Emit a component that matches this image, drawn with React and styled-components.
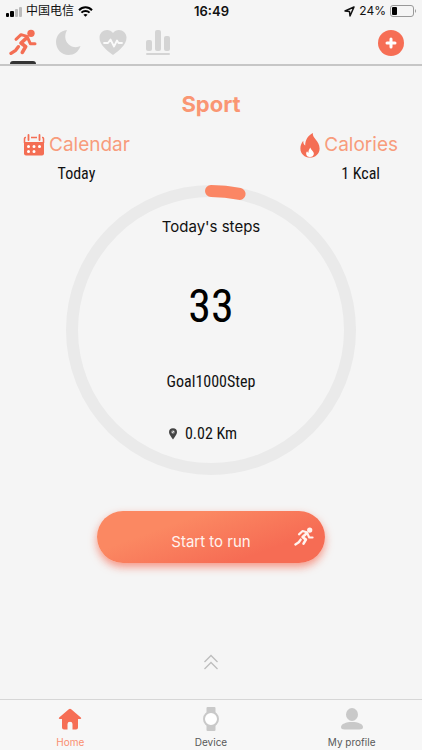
import React from "react";
import styled, { createGlobalStyle } from "styled-components";

const sans = `Inter, "Noto Sans CJK SC", sans-serif`;
const narrow = `"Roboto Condensed", "Liberation Sans Narrow", "Open Sans Condensed", sans-serif`;

const GlobalStyle = createGlobalStyle`
  *, *::before, *::after { box-sizing: border-box; }
  body { margin: 0; background: #f5f5f5; color: #111; font-family: ${sans}; }
  h1, h2, p { margin: 0; font-weight: 400; }
  button { border: 0; padding: 0; background: none; font: inherit; color: inherit; cursor: pointer; }
  a { text-decoration: none; }
  svg { display: block; flex: none; }
`;

const Screen = styled.div`
  min-height: 100vh;
  display: flex;
  flex-direction: column;
`;

const StatusBar = styled.div`
  display: grid;
  grid-template-columns: 1fr auto 1fr;
  align-items: center;
  height: 22px;
  padding: 0 5px 0 6px;
  font-size: 12px;
  line-height: 22px;
`;

const StatusGroup = styled.div`
  display: flex;
  align-items: center;
  gap: 4px;
  justify-content: ${(p) => (p.$end ? "flex-end" : "flex-start")};
`;

const Clock = styled.time`
  font-size: 13px;
  font-weight: 600;
`;

const Toolbar = styled.header`
  display: flex;
  justify-content: space-between;
  height: 44px;
  padding-right: 18px;
  border-bottom: 2px solid #c6c6c6;
`;

const Modes = styled.nav`
  display: flex;
`;

const Mode = styled.button`
  display: flex;
  flex-direction: column;
  align-items: center;
  justify-content: space-between;
  width: 45px;
  padding-top: 7px;
  color: ${(p) => (p.$active ? "#f46e54" : "#d4d4d4")};

  &::after {
    content: "";
    width: 26px;
    height: 3px;
    border-radius: 6px 6px 0 0;
    background: ${(p) => (p.$active ? "#333" : "transparent")};
  }
`;

const AddButton = styled.button`
  align-self: center;
  display: grid;
  place-items: center;
  width: 26px;
  height: 26px;
  border-radius: 50%;
  background: #f66e55;
  color: #fff;
`;

const Main = styled.main`
  flex: 1;
  display: flex;
  flex-direction: column;
  align-items: center;
  padding-top: 22px;
`;

const Title = styled.h1`
  && { font-weight: 700; }
  font-size: 22px;
  line-height: 32px;
  color: #fa9673;
`;

const Stats = styled.div`
  align-self: stretch;
  display: flex;
  justify-content: space-between;
  padding: 11px 24px 0 23px;
`;

const Stat = styled.section`
  display: flex;
  flex-direction: column;
`;

const StatTitle = styled.h2`
  display: flex;
  align-items: center;
  gap: 4px;
  font-size: 19px;
  line-height: 28px;
  color: #f89c7c;
`;

const StatValue = styled.p`
  align-self: ${(p) => (p.$end ? "flex-end" : "center")};
  padding-right: ${(p) => (p.$end ? 18 : 0)}px;
  font-family: ${narrow};
  font-size: 16px;
  line-height: 30px;
`;

const Dial = styled.section`
  display: grid;
  justify-items: center;
  margin-top: -5px;

  > * { grid-area: 1 / 1; }
`;

const Readout = styled.div`
  display: flex;
  flex-direction: column;
  align-items: center;
  padding-top: 31px;
`;

const StepsLabel = styled.h2`
  font-size: 15px;
  line-height: 24px;
`;

const Steps = styled.p`
  padding-top: 37px;
  font-family: ${narrow};
  font-size: 46px;
  line-height: 60px;
  color: #000;
`;

const Detail = styled.p`
  display: flex;
  align-items: center;
  gap: 8px;
  padding-top: ${(p) => p.$space}px;
  font-family: ${narrow};
  font-size: 16px;
  line-height: 24px;
`;

const Distance = styled(Detail)`
  padding-right: 16px;
`;

const StartButton = styled.button`
  display: grid;
  grid-template-columns: 1fr auto 1fr;
  align-items: center;
  width: 54%;
  height: 52px;
  margin-top: 35px;
  padding: 0 11px;
  border-radius: 26px;
  background: linear-gradient(160deg, #fb8862 30%, #f66c54 75%);
  box-shadow: 0 4px 9px rgba(246, 100, 75, 0.65);
  color: #fff3ef;
  font-size: 15px;

  span { grid-column: 2; padding-top: 8px; white-space: nowrap; }
  svg { justify-self: end; }
`;

const ExpandButton = styled.button`
  margin-top: auto;
  margin-bottom: 29px;
  color: #bdbdbd;
`;

const TabBar = styled.nav`
  display: grid;
  grid-template-columns: repeat(3, 1fr);
  height: 51px;
  border-top: 1px solid #d6d6d6;
  background: #f7f7f7;
`;

const Tab = styled.a`
  display: flex;
  flex-direction: column;
  align-items: center;
  gap: 4px;
  padding-top: 7px;
  font-size: 10px;
  line-height: 14px;
  color: ${(p) => (p.$active ? "#fa8f70" : "#595959")};
`;

function Runner({ size }) {
  return (
    <svg width={size} height={size} viewBox="0 0 84 84" fill="none" stroke="currentColor" strokeLinecap="round" strokeLinejoin="round" aria-hidden="true">
      <circle cx="66" cy="13" r="11" fill="currentColor" stroke="none" />
      <path d="M21 31 36 17 54 22 64 44H78" strokeWidth="9" />
      <path d="M54 26 36 42 50 53 40 70" strokeWidth="11" />
      <path d="M6 73 20 64 28 53" strokeWidth="10" />
    </svg>
  );
}

function Signal() {
  return (
    <svg width="16" height="11" viewBox="0 0 16 11" aria-hidden="true">
      <rect y="7" width="3" height="4" rx="1" />
      <rect x="4" y="5" width="4" height="6" rx="1" />
      <rect x="9" y="3" width="3" height="8" rx="1" fill="#bbb" />
      <rect x="13" y="1" width="3" height="10" rx="1" fill="#bbb" />
    </svg>
  );
}

function Wifi() {
  return (
    <svg width="15" height="11" viewBox="0 0 15 11" fill="none" stroke="#000" strokeWidth="2" aria-hidden="true">
      <path d="M1 4.2C4.6.4 10.4.4 14 4.2M3.4 6.6c2.300-2.300 5.900-2.300 8.200 0" />
      <path d="M7.500 10.800 5.400 8.700c1.200-1.100 3-1.100 4.200 0Z" fill="#000" stroke="none" />
    </svg>
  );
}

function LocationArrow() {
  return (
    <svg width="11" height="11" viewBox="0 0 11 11" fill="none" stroke="#111" strokeWidth="1.500" strokeLinejoin="round" aria-hidden="true">
      <path d="M10 1 1 5l4.500.500L6 10Z" />
    </svg>
  );
}

function Battery() {
  return (
    <svg width="27" height="12" viewBox="0 0 27 12" aria-hidden="true">
      <rect x=".5" y=".5" width="23" height="11" rx="2.500" fill="none" stroke="#999" />
      <rect x="2" y="2" width="5" height="8" rx="1" />
      <path d="M25 4q2 2 0 4Z" fill="#999" />
    </svg>
  );
}

function Moon() {
  return (
    <svg width="26" height="27" viewBox="0 0 26 27" fill="currentColor" aria-hidden="true">
      <path d="M12 1C5.500 1.500 1 6.500 1 13c0 7 5.500 13 12.500 13 5.600 0 10.100-3.200 12-9-3.500 1.900-8.800 1.500-12-1.700C9.800 11.600 9.300 6 12 1Z" />
    </svg>
  );
}

function Heart() {
  return (
    <svg width="28" height="27" viewBox="0 0 28 27" aria-hidden="true">
      <path d="M14 26C8 21.500.500 16 .500 8.800.500 1 10-1.500 14 4c4-5.500 13.500-3 13.500 4.800C27.500 16 20 21.500 14 26Z" fill="currentColor" />
      <path d="M5 14h4l2.500-3.500 3.500 7 3-6 1.500 2.500H23" fill="none" stroke="#fafafa" strokeWidth="1.800" strokeLinejoin="round" strokeLinecap="round" />
    </svg>
  );
}

function Bars() {
  return (
    <svg width="26" height="27" viewBox="0 0 26 27" fill="currentColor" aria-hidden="true">
      <rect x="1" y="11" width="6" height="11" rx="2" />
      <rect x="10" y="1" width="6" height="21" rx="2" />
      <rect x="19" y="7" width="6" height="15" rx="2" />
      <rect x="1" y="24" width="24" height="2" rx="1" />
    </svg>
  );
}

function Plus() {
  return (
    <svg width="12" height="12" viewBox="0 0 12 12" stroke="currentColor" strokeWidth="3" strokeLinecap="round" aria-hidden="true">
      <path d="M6 2v8M2 6h8" />
    </svg>
  );
}

function Calendar() {
  return (
    <svg width="22" height="22" viewBox="0 0 22 22" fill="none" stroke="#f46e54" aria-hidden="true">
      <path d="M3 3.500h-.500q-1 0-1 1V9M8 3.500h6M19 3.500h.500q1 0 1 1V9" strokeWidth="1.500" />
      <path d="M5.500 1v5M16.500 1v5" strokeWidth="1.800" strokeLinecap="round" />
      <path d="M1 8h20v11.500a2 2 0 0 1-2 2H3a2 2 0 0 1-2-2Z" fill="#f46e54" stroke="none" />
      <path d="M5.500 12.500h.01M11 12.500h.01M16.500 12.500h.01M5.500 17.500h.01M11 17.500h.01" stroke="#fff" strokeWidth="3" strokeLinecap="round" />
    </svg>
  );
}

function Flame() {
  return (
    <svg width="20" height="25" viewBox="0 0 20 26" aria-hidden="true">
      <path d="M13 0c-1 5 7 8.500 7 16 0 5.500-4.500 9.500-10 9.500S0 21.500 0 16c0-3 1-5.500 3-8 0 2.500.500 4 2 5C5 7 8 2.500 13 0Z" fill="#f46e54" />
      <path d="M10.500 15c0 2.500 3.500 3.500 3.500 6.500 0 2-1.700 3.500-4 3.500s-4-1.500-4-3.500c0-1 .300-1.800 1-2.500.300 1 .800 1.300 1.400 1.500 0-2.200.600-4 2.100-5.500Z" fill="#fff" />
    </svg>
  );
}

function Pin() {
  return (
    <svg width="8" height="12" viewBox="0 0 8 12" aria-hidden="true">
      <path d="M4 11.500C2.500 9 0 6.500 0 4.200a4 4 0 0 1 8 0C8 6.500 5.500 9 4 11.500Z" fill="#444" />
      <circle cx="4" cy="4" r="1.800" fill="#999" />
      <path d="m3.200 4.800 1.700-1.700" stroke="#eee" />
    </svg>
  );
}

function ChevronsUp() {
  return (
    <svg width="16" height="16" viewBox="0 0 16 16" fill="none" stroke="currentColor" strokeWidth="1.300" aria-hidden="true">
      <path d="m1.500 8 6.500-6.500L14.500 8M1.500 15 8 8.500l6.500 6.500" />
    </svg>
  );
}

function Home() {
  return (
    <svg width="24" height="24" viewBox="0 0 24 24" fill="#f66e55" aria-hidden="true">
      <path d="M10.800 2.200q1.200-1.100 2.400 0l9.600 8.300c.700.700.400 1.500-.500 1.500H20v8.500a2 2 0 0 1-2 2h-3.500V17q0-2.300-2.500-2.300T9.500 17v5.500H6a2 2 0 0 1-2-2V12H1.700c-.900 0-1.200-.800-.500-1.500Z" />
    </svg>
  );
}

function Watch() {
  return (
    <svg width="24" height="24" viewBox="0 0 24 24" fill="#c9c9c9" aria-hidden="true">
      <rect x="7.500" width="9" height="7" rx="1" />
      <rect x="7.500" y="17" width="9" height="7" rx="1" />
      <circle cx="12" cy="12" r="7" fill="#fff" stroke="#c9c9c9" strokeWidth="2" />
    </svg>
  );
}

function Person() {
  return (
    <svg width="24" height="24" viewBox="0 0 24 24" fill="#c9c9c9" aria-hidden="true">
      <ellipse cx="12" cy="7.500" rx="6" ry="6.500" />
      <path d="M1 20c0-3 5-5 11-5s11 2 11 5c0 1.800-1.500 2.500-3.500 2.500h-15C2.500 22.500 1 21.800 1 20Z" />
    </svg>
  );
}

function Ring({ steps, goal }) {
  return (
    <svg width="292" height="292" viewBox="0 0 292 292" fill="none" strokeWidth="12" aria-hidden="true">
      <circle cx="146" cy="146" r="139" stroke="#eaeaea" />
      <circle cx="146" cy="146" r="139" stroke="#fb8664" strokeLinecap="round" pathLength={goal} strokeDasharray={`${steps} ${goal}`} transform="rotate(-90 146 146)" />
    </svg>
  );
}

const modes = [
  { name: "Sport", icon: <Runner size={28} /> },
  { name: "Sleep", icon: <Moon /> },
  { name: "Heart rate", icon: <Heart /> },
  { name: "Statistics", icon: <Bars /> },
];

const tabs = [
  { name: "Home", icon: <Home /> },
  { name: "Device", icon: <Watch /> },
  { name: "My profile", icon: <Person /> },
];

export default function App() {
  return (
    <>
      <GlobalStyle />
      <Screen>
        <StatusBar>
          <StatusGroup>
            <Signal />
            <span lang="zh-CN">中国电信</span>
            <Wifi />
          </StatusGroup>
          <Clock>16:49</Clock>
          <StatusGroup $end>
            <LocationArrow />
            <span>24%</span>
            <Battery />
          </StatusGroup>
        </StatusBar>
        <Toolbar>
          <Modes>
            {modes.map((mode, i) => (
              <Mode key={mode.name} type="button" aria-label={mode.name} $active={i === 0}>
                {mode.icon}
              </Mode>
            ))}
          </Modes>
          <AddButton type="button" aria-label="Add">
            <Plus />
          </AddButton>
        </Toolbar>
        <Main>
          <Title>Sport</Title>
          <Stats>
            <Stat>
              <StatTitle><Calendar />Calendar</StatTitle>
              <StatValue>Today</StatValue>
            </Stat>
            <Stat>
              <StatTitle><Flame />Calories</StatTitle>
              <StatValue $end>1 Kcal</StatValue>
            </Stat>
          </Stats>
          <Dial>
            <Ring steps={33} goal={1000} />
            <Readout>
              <StepsLabel>Today's steps</StepsLabel>
              <Steps>33</Steps>
              <Detail $space={34}>Goal1000Step</Detail>
              <Distance $space={28}><Pin />0.02 Km</Distance>
            </Readout>
          </Dial>
          <StartButton type="button">
            <span>Start to run</span>
            <Runner size={20} />
          </StartButton>
          <ExpandButton type="button" aria-label="Show more">
            <ChevronsUp />
          </ExpandButton>
        </Main>
        <TabBar>
          {tabs.map((tab, i) => (
            <Tab key={tab.name} href={`#${i}`} $active={i === 0}>
              {tab.icon}
              {tab.name}
            </Tab>
          ))}
        </TabBar>
      </Screen>
    </>
  );
}
